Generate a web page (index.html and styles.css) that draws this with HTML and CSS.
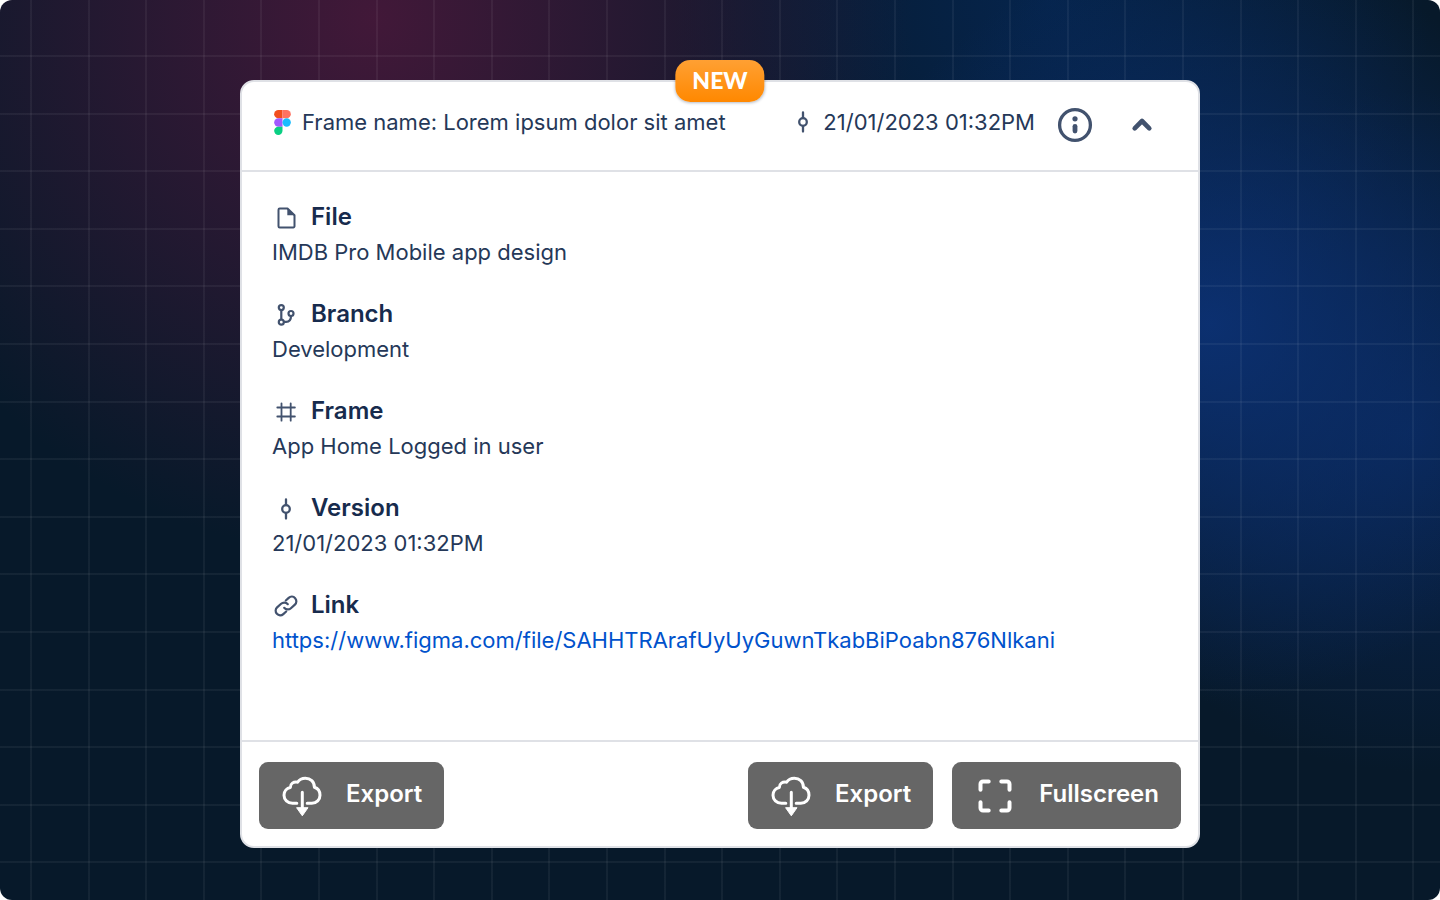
FILE: index.html
```html
<!DOCTYPE html>
<html lang="en">
<head>
<meta charset="utf-8">
<title>Frame details</title>
<link rel="stylesheet" href="styles.css">
</head>
<body>
<svg class="sprite" aria-hidden="true">
  <symbol id="commit" viewBox="0 0 28 28"><g fill="none" stroke="currentColor" stroke-width="2.3" stroke-linecap="round"><circle cx="14" cy="14" r="3.8"/><path d="M14 4.5v5.7M14 17.8v5.7"/></g></symbol>
  <symbol id="cloud" viewBox="0 0 44 44"><path d="M16.8 29.2H12.5C7.5 29.2 4 25.700 4 21.200C4 17 7 14 10.400 13.400C10.300 9.500 13.300 7.600 17.600 8.200C19.300 5.500 22.200 4.200 25.300 4.200C30.500 4.200 34.400 7.800 34.400 13.200C37.700 14.200 40 17.400 40 21.200C40 25.700 36.600 29.200 31.800 29.200H27.200M22.300 18.200V34.500" fill="none" stroke="currentColor" stroke-width="3" stroke-linecap="round" stroke-linejoin="round"/><path d="M16.600 33.700h11.400L22.300 41.800z" fill="currentColor" stroke="currentColor" stroke-linejoin="round"/></symbol>
</svg>
<main class="stage">
  <article class="card">
    <span class="badge">NEW</span>
    <header class="card-header">
      <div class="title">
        <svg class="figma" viewBox="0 0 16 24" aria-hidden="true"><path d="M8 0H4a4 4 0 0 0 0 8h4z" fill="#f24e1e"/><path d="M8 0h4a4 4 0 0 1 0 8H8z" fill="#ff7262"/><path d="M8 8H4a4 4 0 0 0 0 8h4z" fill="#a259ff"/><circle cx="12" cy="12" r="4" fill="#1abcfe"/><path d="M8 16H4a4 4 0 1 0 4 4z" fill="#0acf83"/></svg>
        <span>Frame name: Lorem ipsum dolor sit amet</span>
      </div>
      <div class="meta">
        <svg class="icon" aria-hidden="true"><use href="#commit"/></svg>
        <time datetime="2023-01-21T13:32">21/01/2023 01:32PM</time>
      </div>
      <button class="icon-button" type="button" aria-label="Information"><svg viewBox="0 0 36 36"><circle cx="18" cy="18" r="15.400" fill="none" stroke="currentColor" stroke-width="3.300"/><circle cx="18" cy="11.800" r="2.600" fill="currentColor"/><path d="M18 19.300v4.700" stroke="currentColor" stroke-width="4.800" stroke-linecap="round"/></svg></button>
      <button class="icon-button collapse" type="button" aria-label="Collapse"><svg viewBox="0 0 36 36"><path d="M10.700 21.300L18 14l7.300 7.300" fill="none" stroke="currentColor" stroke-width="4.600" stroke-linecap="round" stroke-linejoin="round"/></svg></button>
    </header>
    <dl class="details">
      <div>
        <dt><svg class="icon" viewBox="0 0 28 28" aria-hidden="true"><path d="M15.500 4.500H7.700a1.200 1.200 0 0 0-1.200 1.200v16.600a1.200 1.200 0 0 0 1.200 1.200h13.600a1.200 1.200 0 0 0 1.200-1.200V11.300z" fill="none" stroke="currentColor" stroke-width="2" stroke-linejoin="round"/><path d="M15.300 4.300V11.300H22.700z" fill="currentColor"/></svg>File</dt>
        <dd>IMDB Pro Mobile app design</dd>
      </div>
      <div>
        <dt><svg class="icon" viewBox="0 0 28 28" aria-hidden="true"><g fill="none" stroke="currentColor" stroke-width="2.200"><circle cx="9.300" cy="6.600" r="2.500"/><circle cx="9.300" cy="21.200" r="2.500"/><circle cx="19" cy="12.500" r="2.500"/><path d="M9.300 9.100v9.600M11.800 20.800h2.300c3.400 0 4.900-2 4.900-5.800"/></g></svg>Branch</dt>
        <dd>Development</dd>
      </div>
      <div>
        <dt><svg class="icon" viewBox="0 0 28 28" aria-hidden="true"><path d="M9.500 5.300v17.400M18.700 5.300v17.400M5.300 9.500h17.600M5.300 18.500h17.600" fill="none" stroke="currentColor" stroke-width="1.800" stroke-linecap="round"/></svg>Frame</dt>
        <dd>App Home Logged in user</dd>
      </div>
      <div>
        <dt><svg class="icon" aria-hidden="true"><use href="#commit"/></svg>Version</dt>
        <dd>21/01/2023 01:32PM</dd>
      </div>
      <div>
        <dt><svg class="icon" viewBox="-2 -2 28 28" aria-hidden="true"><g fill="none" stroke="currentColor" stroke-width="2.200" stroke-linecap="round" stroke-linejoin="round"><path d="M10.200 13.800a4.700 4.700 0 0 0 6.700.4l4-3.600a4.500 4.500 0 0 0-6.200-6.700l-2.900 2.600"/><path d="M13.800 10.200a4.700 4.700 0 0 0-6.700-.4l-4 3.600a4.500 4.500 0 0 0 6.200 6.700l2.900-2.600"/></g></svg>Link</dt>
        <dd><a href="#">https://www.figma.com/file/SAHHTRArafUyUyGuwnTkabBiPoabn876Nlkani</a></dd>
      </div>
    </dl>
    <footer class="card-footer">
      <button class="action" type="button"><svg aria-hidden="true"><use href="#cloud"/></svg>Export</button>
      <button class="action push" type="button"><svg aria-hidden="true"><use href="#cloud"/></svg>Export</button>
      <button class="action" type="button"><svg viewBox="0 0 44 44" aria-hidden="true"><path d="M7.500 15.700V10a2.500 2.500 0 0 1 2.500-2.500h5.700M28.300 7.500H34a2.500 2.500 0 0 1 2.500 2.500v5.700M36.500 28.300V34a2.500 2.500 0 0 1-2.500 2.500h-5.700M15.700 36.500H10A2.500 2.500 0 0 1 7.500 34v-5.700" fill="none" stroke="currentColor" stroke-width="4" stroke-linecap="round"/></svg>Fullscreen</button>
    </footer>
  </article>
</main>
</body>
</html>
```

FILE: styles.css
```css
* { box-sizing: border-box; }

body {
  margin: 0;
  background: #fff;
  color: #253858;
  font: 22px/36px Inter, "Liberation Sans", sans-serif;
}

.sprite { position: absolute; width: 0; height: 0; }

.stage {
  min-height: 100vh;
  padding: 80px 24px 52px;
  border-radius: 12px;
  background:
    repeating-linear-gradient(90deg, transparent 0 30px, rgba(255, 255, 255, .05) 30px 32px, transparent 32px 4vw),
    repeating-linear-gradient(180deg, transparent 0 55px, rgba(255, 255, 255, .05) 55px 57px, transparent 57px 4vw),
    radial-gradient(circle at 26% 2%, rgba(72, 24, 58, .9), rgba(60, 24, 58, 0) 540px),
    radial-gradient(circle at 84% 36%, rgba(12, 50, 118, .9), rgba(12, 50, 118, 0) 380px),
    radial-gradient(circle at 73% 0, rgba(5, 40, 88, .75), rgba(5, 40, 88, 0) 380px),
    radial-gradient(circle at 98% 48%, rgba(10, 42, 98, .75), rgba(10, 42, 98, 0) 340px),
    #07192a;
}

.card {
  position: relative;
  max-width: 960px;
  margin: 0 auto;
  border: 2px solid #dfe1e6;
  border-radius: 14px;
  background: #fff;
}

.badge {
  position: absolute;
  top: -22px;
  left: 50%;
  transform: translateX(-50%);
  padding: 0 17px 2px;
  border-radius: 15px;
  background: linear-gradient(#ffa033, #ff8800);
  box-shadow: 0 1px 3px rgba(9, 30, 66, .3);
  color: #fff;
  font: 900 23px/40px Lato, sans-serif;
}

.card-header {
  display: flex;
  align-items: flex-start;
  height: 90px;
  padding: 22px 38px 0 32px;
  border-bottom: 2px solid #dfe1e6;
}

.title, .meta { display: flex; align-items: center; }
.title { flex: 1; gap: 11px; }
.meta { gap: 6px; }
.figma { width: 17px; height: 25px; }
.icon { width: 28px; height: 28px; color: #42526e; }

.icon-button {
  display: flex;
  margin: 3px 0 0 22px;
  padding: 0;
  border: 0;
  background: none;
  color: #42526e;
}
.icon-button svg { width: 36px; height: 36px; }
.collapse { margin-left: 31px; }

.details {
  display: grid;
  gap: 27px;
  margin: 0;
  padding: 28px 30px 82px;
}
dt {
  display: flex;
  align-items: center;
  gap: 11px;
  color: #172b4d;
  font-size: 24px;
  font-weight: 600;
  line-height: 34px;
}
dt .icon { margin-top: 2px; }
dd { margin: 0; overflow-wrap: anywhere; }
a { color: #0052cc; text-decoration: none; }

.card-footer {
  display: flex;
  flex-wrap: wrap;
  gap: 19px;
  padding: 20px 17px 17px;
  border-top: 2px solid #dfe1e6;
}
.action {
  display: flex;
  align-items: flex-start;
  gap: 22px;
  padding: 12px 22px 11px 21px;
  border: 0;
  border-radius: 9px;
  background: #666;
  color: #fff;
  font: 600 24px/40px Inter, "Liberation Sans", sans-serif;
}
.action svg { width: 44px; height: 44px; }
.push { margin-left: auto; }
```
